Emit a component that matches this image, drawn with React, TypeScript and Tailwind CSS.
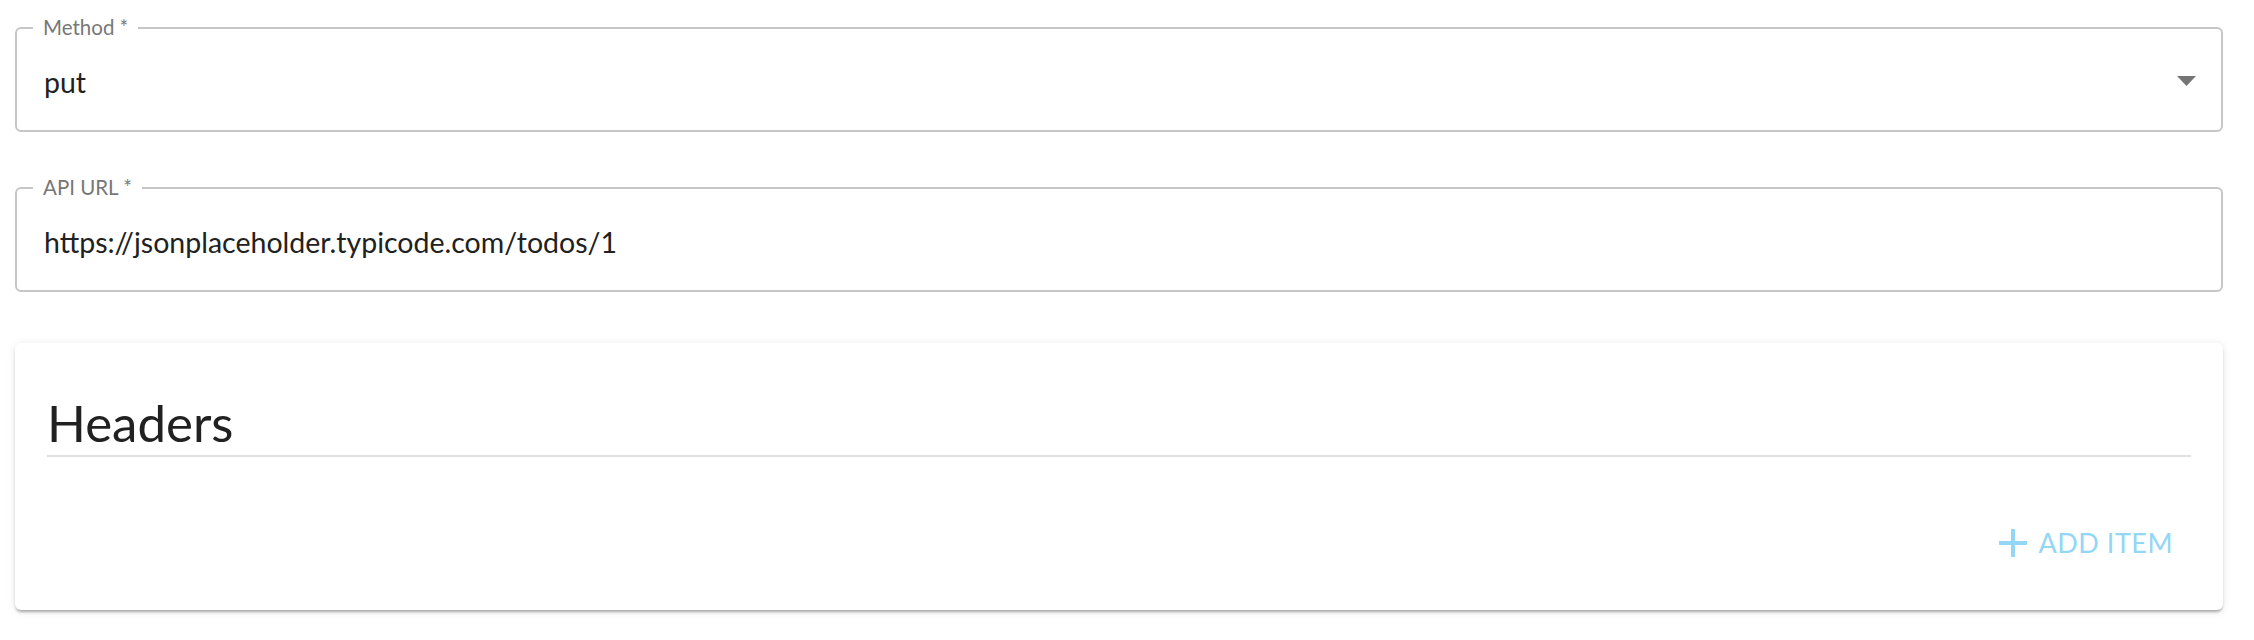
import React from "react";

const font = { fontFamily: '"Lato", "Noto Sans", sans-serif' };

function Field({ label, value, select }: { label: string; value: string; select?: boolean }) {
  return (
    <div className="relative h-[105px] rounded-[6px] border-2 border-[#c6c6c6] flex items-center pl-[27px] pr-[25px]">
      <span className="absolute left-[16px] -top-[15px] bg-white px-[10px] text-[20.5px] leading-[26px] text-[#777777]">
        {label}
      </span>
      <span className="flex-1 text-[28.5px] leading-[34px] text-[#212121] pt-[4px]">{value}</span>
      {select && (
        <svg width="19" height="10" viewBox="0 0 19 10" className="mt-[2px]">
          <path d="M0 0 L19 0 L9.5 10 Z" fill="#757575" />
        </svg>
      )}
    </div>
  );
}

export default function App() {
  return (
    <div style={font} className="w-[2254px] h-[640px] bg-white pl-[15px] pr-[31px] pt-[27px] flex flex-col">
      <Field label="Method *" value="put" select />
      <div className="h-[55px]" />
      <Field label="API URL *" value="https://jsonplaceholder.typicode.com/todos/1" />
      <div className="h-[51px]" />
      <div className="h-[267px] rounded-[6px] bg-white shadow-[0_3px_3px_-1px_rgba(0,0,0,0.3),0_1px_8px_0_rgba(0,0,0,0.1)] px-[32px] pt-[50px] flex flex-col">
        <div className="text-[51px] leading-[60px] text-[#212121]">Headers</div>
        <div className="mt-[2px] h-[2px] bg-[#e0e0e0]" />
        <div className="flex justify-end pr-[18px] mt-[71px]">
          <div className="flex items-center gap-[12px] text-[#93d6f6]">
            <svg width="28" height="28" viewBox="0 0 28 28">
              <rect x="12" y="0" width="4" height="28" fill="#93d6f6" />
              <rect x="0" y="12" width="28" height="4" fill="#93d6f6" />
            </svg>
            <span className="text-[27px] leading-[30px] tracking-[0.5px]">ADD ITEM</span>
          </div>
        </div>
      </div>
    </div>
  );
}
